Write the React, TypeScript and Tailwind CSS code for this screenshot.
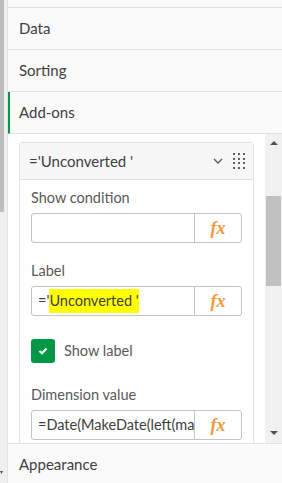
import React from 'react';

const font = { fontFamily: 'Lato, "Open Sans", sans-serif' };

function Fx() {
  return (
    <div className="w-[47px] shrink-0 h-full flex items-center justify-center border-l border-[#c4c4c4]">
      <span
        className="text-[18px] font-bold italic text-[#f7983a] leading-none"
        style={{ fontFamily: '"Liberation Serif", serif' }}
      >
        fx
      </span>
    </div>
  );
}

function ExprInput({ children }: { children?: React.ReactNode }) {
  return (
    <div className="mt-[5px] h-[30px] flex border border-[#c4c4c4] rounded-[3px] bg-white overflow-hidden">
      <div className="flex-1 min-w-0 flex items-center pl-[6px] text-[14.5px] text-[#404040] whitespace-nowrap overflow-hidden">
        {children}
      </div>
      <Fx />
    </div>
  );
}

function GripIcon() {
  return (
    <div className="grid grid-cols-3 gap-x-[2.5px] gap-y-[2.5px] w-[12px]">
      {Array.from({ length: 12 }).map((_, i) => (
        <span key={i} className="w-[2px] h-[2px] bg-[#595f6b]" />
      ))}
    </div>
  );
}

function NavRow({ label, active }: { label: string; active?: boolean }) {
  return (
    <div
      className={`h-[42px] shrink-0 flex items-center border-b border-[#e3e3e3] bg-[#fafafa] text-[15px] text-[#404040] ${
        active ? 'h-[41px] border-l-2 border-l-[#009845] pl-[9px]' : 'pl-[11px]'
      }`}
    >
      {label}
    </div>
  );
}

export default function App() {
  return (
    <div className="w-[282px] h-[483px] flex overflow-hidden bg-white" style={font}>
      {/* outer scrollbar */}
      <div className="w-[7px] shrink-0 flex flex-col bg-[#efefef]">
        <div className="w-[4px] h-[212px] bg-[#bdbdbd]" />
        <div className="flex-1" />
        <div className="h-[12px] flex">
          <svg width="4" height="4" viewBox="0 0 4 4">
            <path d="M0 0 L3 0 L1.5 3 Z" fill="#505050" />
          </svg>
        </div>
      </div>

      <div className="flex-1 min-w-0 flex flex-col border-l border-[#e3e3e3]">
        <div className="h-[8px] shrink-0 border-b border-[#e3e3e3] bg-[#fafafa]" />
        <NavRow label="Data" />
        <NavRow label="Sorting" />
        <NavRow label="Add-ons" active />

        {/* scrollable content */}
        <div className="h-[309px] shrink-0 flex overflow-hidden">
          <div className="flex-1 min-w-0 px-[11px] pt-[8px] overflow-hidden">
            <div className="border border-[#e3e3e3] rounded-[3px]">
              <div className="h-[37px] flex items-center pl-[9px] pr-[8px] bg-[#f7f7f7] border-b border-[#e3e3e3] rounded-t-[3px]">
                <span className="flex-1 text-[15px] text-[#404040]">='Unconverted '</span>
                <svg width="10" height="6" viewBox="0 0 10 6" className="mr-[10px]">
                  <path d="M1 1 L5 5 L9 1" fill="none" stroke="#595959" strokeWidth="1.3" />
                </svg>
                <GripIcon />
              </div>

              <div className="px-[11px] pt-[8px] pb-[40px]">
                <div className="h-[20px] flex items-center text-[14.5px] text-[#595959]">Show condition</div>
                <ExprInput />

                <div className="mt-[18px] h-[20px] flex items-center text-[14.5px] text-[#595959]">Label</div>
                <ExprInput>
                  ='<span className="bg-[#ffff00] py-[1px]">Unconverted '</span>
                </ExprInput>

                <div className="mt-[23px] h-[24px] flex items-center gap-[9px]">
                  <div className="w-[24px] h-[24px] rounded-[3px] bg-[#009845] flex items-center justify-center">
                    <svg width="10" height="8" viewBox="0 0 10 8">
                      <path d="M1.5 4 L4 6.3 L8.5 1.5" fill="none" stroke="#fff" strokeWidth="2.2" />
                    </svg>
                  </div>
                  <span className="text-[14.5px] text-[#595959]">Show label</span>
                </div>

                <div className="mt-[22px] h-[20px] flex items-center text-[14.5px] text-[#595959]">Dimension value</div>
                <ExprInput>=Date(MakeDate(left(max(</ExprInput>
              </div>
            </div>
          </div>

          {/* inner scrollbar */}
          <div className="w-[17px] shrink-0 flex flex-col bg-[#f1f1f1]">
            <div className="h-[17px] flex items-center justify-center">
              <svg width="8" height="4" viewBox="0 0 8 4">
                <path d="M0 4 L4 0 L8 4 Z" fill="#505050" />
              </svg>
            </div>
            <div className="mt-[45px] mx-[1px] h-[90px] bg-[#c1c1c1]" />
            <div className="flex-1" />
            <div className="h-[17px] flex items-center justify-center mb-[2px]">
              <svg width="8" height="4" viewBox="0 0 8 4">
                <path d="M0 0 L8 0 L4 4 Z" fill="#505050" />
              </svg>
            </div>
          </div>
        </div>

        <div className="h-[41px] shrink-0 flex items-center pl-[11px] border-t border-[#e3e3e3] bg-[#fafafa] text-[15px] text-[#404040]">
          Appearance
        </div>
      </div>
    </div>
  );
}
